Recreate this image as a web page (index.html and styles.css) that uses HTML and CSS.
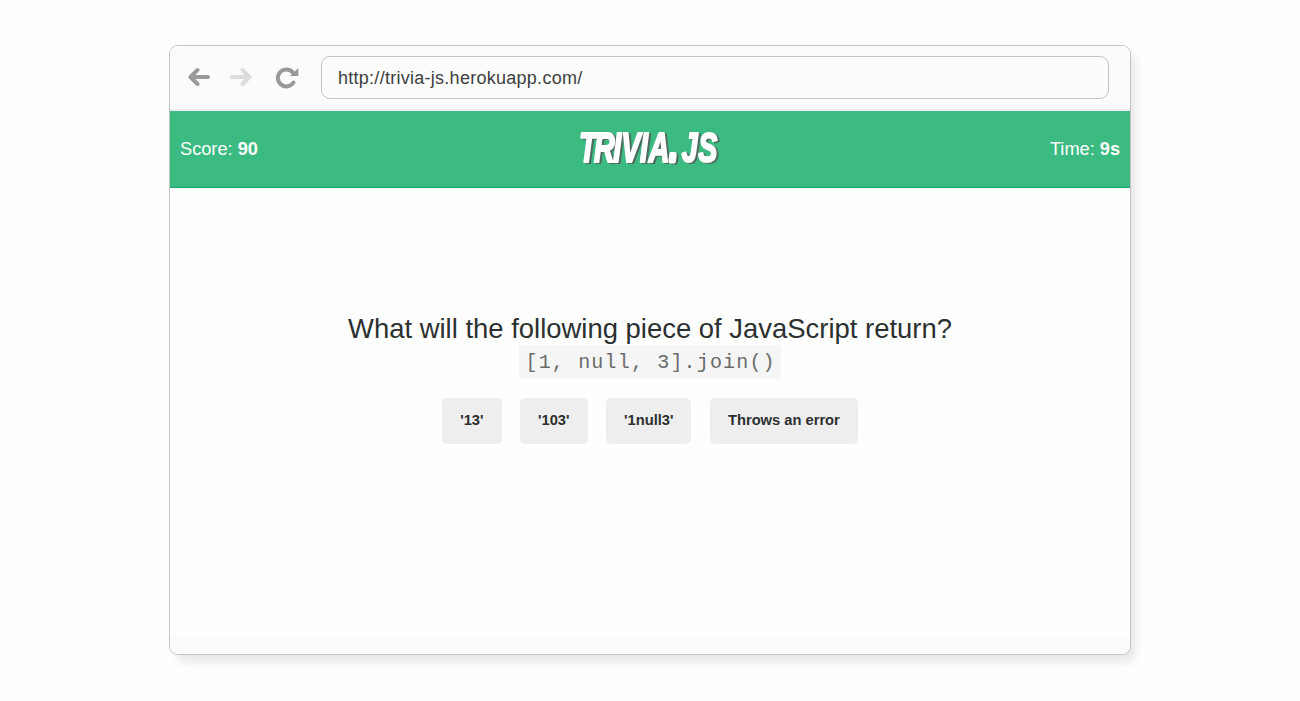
FILE: index.html
```html
<!DOCTYPE html>
<html lang="en">
<head>
<meta charset="utf-8">
<title>Trivia.js</title>
<link rel="stylesheet" href="styles.css">
</head>
<body>
<div class="browser">
  <div class="toolbar">
    <svg class="nav" width="112" height="28" viewBox="0 0 112 28" fill="none" stroke-width="4" stroke-linecap="round" stroke-linejoin="round">
      <path stroke="#989a99" d="M20 14H3M9.500 7L2.500 14L9.500 21"/>
      <path stroke="#dcdcdc" d="M44 14H61M54.500 7L61.500 14L54.500 21"/>
      <path stroke="#989a99" d="M106 18.500A8.500 8.500 0 1 1 105 8" transform="translate(-.5 1)"/>
      <path fill="#989a99" d="M110.300 5V13H102L105 10Z"/>
    </svg>
    <div class="address">http://trivia-js.herokuapp.com/</div>
  </div>
  <header class="header">
    <div class="stat">Score: <b>90</b></div>
    <svg class="logo" width="144" height="56" viewBox="0 0 144 56">
      <text transform="translate(0 41) scale(.68 1)" x="1.500 23.500 52 63.500 91 104 134.500 152.500 177">TRIVIA<tspan class="logo-dot" dy="-1.500">.</tspan><tspan dy="1.500">JS</tspan></text>
    </svg>
    <div class="stat stat-right">Time: <b>9s</b></div>
  </header>
  <main class="quiz">
    <h1 class="question">What will the following piece of JavaScript return?</h1>
    <code class="snippet">[1, null, 3].join()</code>
    <div class="answers">
      <button class="answer">'13'</button>
      <button class="answer">'103'</button>
      <button class="answer">'1null3'</button>
      <button class="answer">Throws an error</button>
    </div>
  </main>
  <div class="footer"></div>
</div>
</body>
</html>
```
FILE: styles.css
```css
* { box-sizing: border-box; }
body {
  margin: 0;
  padding-top: 45px;
  height: 701px;
  background: #fefefe;
  color: #2c3030;
  font-family: "Liberation Sans", Arial, sans-serif;
}
.browser {
  width: 962px;
  height: 610px;
  margin: 0 auto;
  border: 1px solid #c3c3c3;
  border-radius: 9px;
  overflow: hidden;
  display: flex;
  flex-direction: column;
  background: #fefefe;
  box-shadow: 6px 8px 9px -1px rgba(0, 0, 0, .09);
}
.toolbar {
  height: 65px;
  flex: none;
  display: flex;
  align-items: center;
  padding: 0 21px 0 18px;
  background: #fbfbfb;
  border-bottom: 2px solid #ececec;
}
.nav { flex: none; margin-right: 21px; margin-bottom: 1px; }
.address {
  flex: 1;
  height: 43px;
  border: 1px solid #c3c3c3;
  border-radius: 9px;
  padding-left: 16px;
  line-height: 42px;
  font-size: 18px;
  letter-spacing: .27px;
  color: #3c4040;
  background: #fcfcfc;
}
.header {
  height: 77px;
  flex: none;
  display: flex;
  align-items: center;
  justify-content: space-between;
  padding: 0 10px;
  color: #fff;
  background: #3bba82;
  border-bottom: 1px solid #19a968;
}
.stat { width: 120px; font-size: 18.2px; }
.stat-right { text-align: right; }
.logo {
  overflow: visible;
  font-size: 42px;
  font-weight: bold;
  font-style: italic;
  fill: #fff;
  stroke: #fff;
  stroke-width: 2.2px;
  stroke-linejoin: round;
  filter: drop-shadow(2px 1.500px 0 #4f6a5e);
}
.logo-dot { stroke-width: 5px; }
.quiz {
  flex: 1;
  display: flex;
  flex-direction: column;
  align-items: center;
  padding-top: 125px;
}
.question {
  margin: 0;
  font-size: 27.45px;
  font-weight: normal;
  line-height: 32px;
  white-space: nowrap;
}
.snippet {
  width: 262px;
  height: 34px;
  line-height: 36px;
  padding-left: 6.5px;
  white-space: nowrap;
  font-family: "Liberation Mono", monospace;
  font-size: 20px;
  letter-spacing: 1.17px;
  color: #6a6c6c;
  background: #f5f5f5;
}
.answers { display: flex; gap: 18.5px; margin-top: 19px; }
.answer {
  height: 45.500px;
  padding: 0 18px 1px;
  border: 0;
  border-radius: 5px;
  background: #eee;
  color: #2c3030;
  font: bold 14.7px "Liberation Sans", Arial, sans-serif;
}
.footer { height: 18px; flex: none; background: #fbfbfb; }
```
